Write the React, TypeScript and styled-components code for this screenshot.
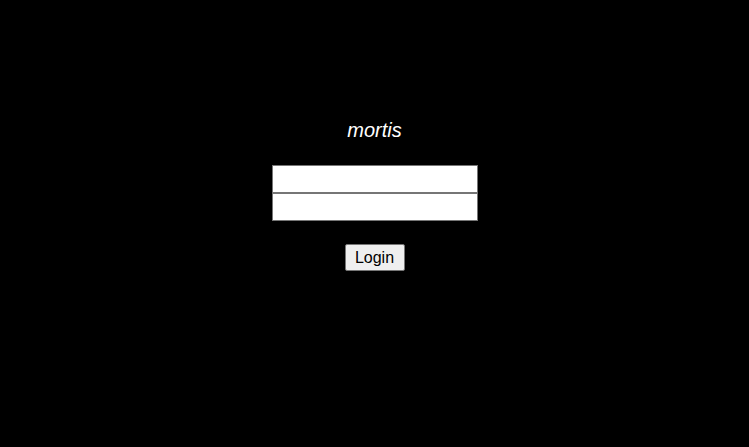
import React from 'react';
import styled, { createGlobalStyle } from 'styled-components';

const GlobalStyle = createGlobalStyle`
    html, body {
        margin: 0;
        padding: 0;
        background: #000000;
    }

    body {
        font-family: "Liberation Sans", Arial, sans-serif;
        min-height: 447px;
    }
`;

export default function App() {
    return (
        <>
            <GlobalStyle />
            <LoginPage>
                <LoginForm onSubmit={(e) => e.preventDefault()}>
                    <LoginTitle>mortis</LoginTitle>
                    <LoginFields>
                        <LoginInput type="text" name="username" />
                        <LoginInput type="password" name="password" />
                    </LoginFields>
                    <LoginButton type="submit">Login</LoginButton>
                </LoginForm>
            </LoginPage>
        </>
    );
}

const LoginPage = styled.main`
    display: flex;
    justify-content: center;
    padding-top: 119px;
    min-height: 447px;
    box-sizing: border-box;
`;

const LoginForm = styled.form`
    display: flex;
    flex-direction: column;
    align-items: center;
    gap: 23px;
`;

const LoginTitle = styled.h1`
    margin: 0;
    font-size: 20px;
    font-weight: normal;
    font-style: italic;
    line-height: 23px;
    color: #ffffff;
`;

const LoginFields = styled.div`
    display: flex;
    flex-direction: column;
`;

const LoginInput = styled.input`
    box-sizing: border-box;
    width: 206px;
    height: 28px;
    margin: 0;
    padding: 1px 4px;
    border: 1px solid #767676;
    border-radius: 0;
    background: #ffffff;
    font-family: "Liberation Sans", Arial, sans-serif;
    font-size: 16px;
    outline: none;
`;

const LoginButton = styled.button`
    box-sizing: border-box;
    width: 60px;
    height: 27px;
    padding: 0;
    border: 1px solid #767676;
    border-radius: 2px;
    background: #efefef;
    color: #000000;
    font-family: "Liberation Sans", Arial, sans-serif;
    font-size: 16px;
    cursor: pointer;
`;
